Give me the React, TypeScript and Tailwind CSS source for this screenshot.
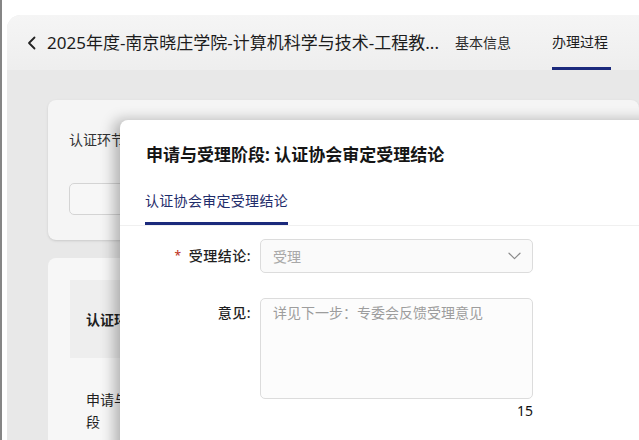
import React from 'react';

const ChevronLeft = () => (
  <svg width="10" height="14" viewBox="0 0 10 14" fill="none">
    <path d="M7.5 1.5 2 7l5.5 5.5" stroke="#222" strokeWidth="1.8" strokeLinecap="round" strokeLinejoin="round" />
  </svg>
);

const ChevronDown = () => (
  <svg width="13" height="8" viewBox="0 0 13 8" fill="none">
    <path d="M1 1.2 6.5 6.6 12 1.2" stroke="#8a8a8a" strokeWidth="1.2" strokeLinecap="round" strokeLinejoin="round" />
  </svg>
);

const App: React.FC = () => {
  return (
    <div className="relative h-[440px] w-[639px] overflow-hidden border-l-2 border-[#858585] bg-white pl-[5px] pt-[15px] font-['Noto_Sans','Noto_Sans_CJK_SC',sans-serif] text-[#1f1f1f]">
      {/* dimmed page behind the dialog */}
      <div className="flex h-full flex-col overflow-hidden rounded-tl-[14px] bg-[#e8e8e8]">
        {/* Header */}
        <div className="flex h-[55px] shrink-0 items-stretch bg-gradient-to-b from-[#f5f5f5] to-[#eeeeee] pl-[20px]">
          <div className="flex items-center">
            <ChevronLeft />
          </div>
          <div className="ml-[10px] flex w-[392px] items-center">
            <span className="whitespace-nowrap text-[17px] leading-[22px] text-[#1c1c1c]">
              2025年度-南京晓庄学院-计算机科学与技术-工程教...
            </span>
          </div>
          <div className="ml-[16px] flex items-center text-[14px] text-[#2a2a2a]">基本信息</div>
          <div className="ml-[41px] flex flex-col justify-end">
            <div className="flex flex-1 items-center text-[14px] text-[#1c1c1c]">办理过程</div>
            <div className="h-[3px] w-[59px] bg-[#1b2a7c]" />
          </div>
        </div>

        {/* Body */}
        <div className="flex flex-col gap-[18px] pl-[41px] pt-[30px]">
          <div className="h-[140px] rounded-lg bg-[#f5f5f5] pl-[21px] pt-[30px] shadow-sm">
            <div className="text-[14px] leading-[20px] text-[#333]">认证环节</div>
            <div className="mt-[33px] h-[32px] w-[200px] rounded-[5px] border border-[#d4d4d4] bg-[#f7f7f7]" />
          </div>
          <div className="h-[200px] rounded-lg bg-[#f7f7f7] pl-[22px] pt-[22px]">
            <div className="flex h-[78px] items-center bg-[#eeeeee] pl-[16px]">
              <span className="text-[14px] font-bold">认证环节</span>
            </div>
            <div className="mt-[31px] w-[100px] pl-[16px] text-[14px] leading-[22px]">申请与受理阶段</div>
          </div>
        </div>
      </div>

      {/* Dialog */}
      <div className="absolute left-[118px] top-[120px] h-[400px] w-[600px] rounded-tl-lg bg-white pt-[25px] shadow-[-6px_0_14px_rgba(0,0,0,0.28)]">
        <h2 className="pl-[26px] text-[17px] font-bold leading-[20px] text-[#151515]">
          申请与受理阶段: 认证协会审定受理结论
        </h2>

        <div className="mt-[23px] border-b border-[#f0f0f0] pl-[25px]">
          <div className="inline-block border-b-[3px] border-[#1b2a7c] pb-[11px] text-[14px] leading-[20px] tracking-[0.3px] text-[#1f2d6b]">
            认证协会审定受理结论
          </div>
        </div>

        <div className="mt-[13px] flex flex-col pl-[26px]">
          <div className="flex items-center">
            <label className="flex w-[106px] items-center justify-end pr-[1px] text-[14px] font-medium leading-[20px] tracking-[0.5px]">
              <span className="mr-[7px] text-[12px] text-[#c0392b]">*</span>
              受理结论:
            </label>
            <div className="ml-[8px] flex h-[34px] w-[273px] items-center justify-between rounded-[5px] border border-[#dcdcdc] bg-[#fafafa] pl-[12px] pr-[11px]">
              <span className="text-[14px] text-[#a8a8a8]">受理</span>
              <ChevronDown />
            </div>
          </div>

          <div className="mt-[25px] flex items-start">
            <label className="w-[106px] pr-[1px] pt-[5px] text-right text-[14px] font-medium leading-[20px] tracking-[0.5px]">意见:</label>
            <div className="ml-[8px] flex flex-col items-end">
              <div className="h-[101px] w-[273px] rounded-[5px] border border-[#dcdcdc] bg-[#fcfcfc] pl-[12px] pt-[4px] text-[14px] leading-[20px] text-[#9d9d9d]">
                详见下一步：专委会反馈受理意见
              </div>
              <span className="mt-[2px] text-[14px] leading-[20px] text-[#111]">15</span>
            </div>
          </div>
        </div>
      </div>
    </div>
  );
};

export default App;
